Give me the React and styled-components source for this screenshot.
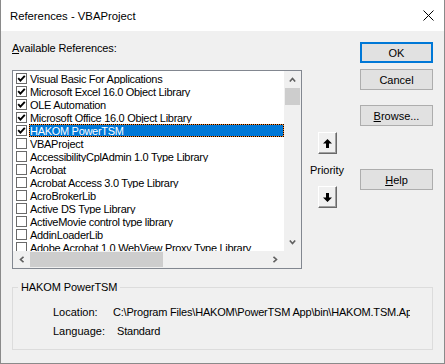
import React from "react";
import styled, { createGlobalStyle } from "styled-components";

const Global = createGlobalStyle`
  html, body { margin: 0; padding: 0; background: #fff; }
  #root { width: 445px; height: 364px; }
  * { box-sizing: border-box; }
`;

const Window = styled.div`
  width: 445px;
  height: 364px;
  display: flex;
  flex-direction: column;
  border: 1px solid #8a8a8a;
  border-top: none;
  font-family: "Liberation Sans", Arial, sans-serif;
  font-size: 11px;
  color: #000;
  background: #f0f0f0;
`;

const TitleBar = styled.div`
  height: 31px;
  flex: none;
  background: #fff;
  display: flex;
  align-items: center;
  justify-content: space-between;
  padding: 0 10px 0 9px;
  font-size: 11.3px;
`;

const Body = styled.div`
  flex: 1;
  display: flex;
  flex-direction: column;
  padding: 10px 11px 13px 11px;
`;

const TopRow = styled.div`
  display: grid;
  grid-template-columns: 290px 50px 1fr;
`;

const LeftCol = styled.div`
  display: flex;
  flex-direction: column;
`;

const Label = styled.div`
  height: 29px;
  line-height: 15px;
  letter-spacing: -0.1px;
`;

const U = styled.span`
  text-decoration: underline;
  text-underline-offset: 1px;
`;

const ListBox = styled.div`
  width: 290px;
  height: 199px;
  border: 1px solid #828790;
  background: #fff;
  display: grid;
  grid-template-columns: 1fr 17px;
  grid-template-rows: 180px 17px;
`;

const Items = styled.div`
  overflow: hidden;
  padding: 1px 0 0 3px;
`;

const Row = styled.div`
  height: 13px;
  display: flex;
  align-items: center;
  white-space: nowrap;
`;

const Box = styled.span`
  width: 11px;
  height: 11px;
  flex: none;
  border: 1px solid #6a6a6a;
  background: #fff;
  display: flex;
  align-items: center;
  justify-content: center;
  margin-right: 2px;
`;

const ItemText = styled.span`
  flex: 1;
  height: 13px;
  line-height: 12px;
  padding-left: 1px;
  letter-spacing: -0.3px;
  border: 1px solid transparent;
  border-left: none;
  overflow: hidden;
  ${(p) =>
    p.$selected &&
    `
    color: #fff;
    border: 1px dotted #000;
    padding-left: 0;
    background: linear-gradient(#0078d7, #0078d7) padding-box, #ff8728 border-box;
  `}
`;

const VScroll = styled.div`
  background: #f0f0f0;
  display: flex;
  flex-direction: column;
`;

const HScroll = styled.div`
  background: #f0f0f0;
  display: flex;
`;

const Corner = styled.div`
  background: #f0f0f0;
`;

const ArrowCell = styled.div`
  width: 17px;
  height: 17px;
  flex: none;
  display: flex;
  align-items: center;
  justify-content: center;
`;

const Track = styled.div`
  flex: 1;
  display: flex;
  flex-direction: ${(p) => (p.$vertical ? "column" : "row")};
`;

const Thumb = styled.div`
  background: #cdcdcd;
  ${(p) =>
    p.$vertical
      ? `height: 17px; margin: 0 1px; `
      : `width: 133px; margin: 1px 0; `}
`;

const MidCol = styled.div`
  display: flex;
  flex-direction: column;
  align-items: center;
  padding-top: 91px;
`;

const ArrowButton = styled.button`
  width: 19px;
  height: 22px;
  padding: 0;
  background: #f0f0f0;
  border: 1px solid;
  border-color: #fff #696969 #696969 #fff;
  box-shadow: inset -1px -1px #a0a0a0;
  display: flex;
  align-items: center;
  justify-content: center;
`;

const Priority = styled.div`
  line-height: 15px;
  margin: 9px 0 8px;
`;

const RightCol = styled.div`
  display: flex;
  flex-direction: column;
  align-items: flex-end;
  padding-top: 1px;
`;

const Button = styled.button`
  width: 73px;
  height: 21px;
  margin-top: ${(p) => p.$gap || 0}px;
  padding: 0;
  font-family: inherit;
  font-size: 11px;
  color: #000;
  background: #e1e1e1;
  border: ${(p) => (p.$default ? "2px solid #0078d7" : "1px solid #adadad")};
`;

const Group = styled.fieldset`
  margin: 11px 0 0;
  padding: 0 22px 10px 0;
  border: 1px solid #dcdcdc;
  min-width: 0;
`;

const Legend = styled.legend`
  margin-left: 5px;
  padding: 0 3px;
  line-height: 14px;
  letter-spacing: -0.1px;
`;

const Details = styled.div`
  display: grid;
  grid-template-columns: 60px 1fr;
  row-gap: 4px;
  margin-top: 11px;
  padding-left: 40px;
  line-height: 15px;
`;

const Value = styled.div`
  white-space: nowrap;
  overflow: hidden;
  letter-spacing: -0.2px;
  padding-left: ${(p) => p.$indent || 0}px;
`;

const Chevron = ({ dir }) => {
  const pts = {
    up: "0.8,4.5 3.5,1.5 6.2,4.5",
    down: "0.8,0.5 3.5,3.5 6.2,0.5",
    left: "4.5,0.8 1.5,3.5 4.5,6.2",
    right: "0.5,0.8 3.5,3.5 0.5,6.2",
  }[dir];
  const v = dir === "up" || dir === "down";
  return (
    <svg width={v ? 7 : 5} height={v ? 5 : 7} viewBox={v ? "0 0 7 5" : "0 0 5 7"}>
      <polyline points={pts} fill="none" stroke="#606060" strokeWidth="1.6" />
    </svg>
  );
};

const Check = () => (
  <svg width="9" height="9" viewBox="0 0 9 9">
    <polyline points="1.2,4.2 3.4,6.6 7.8,1.8" fill="none" stroke="#000" strokeWidth="1.9" />
  </svg>
);

const BigArrow = ({ down }) => (
  <svg width="9" height="9" viewBox="0 0 9 9" style={down ? { transform: "rotate(180deg)" } : undefined}>
    <polygon points="4.5,0 9,4.5 6,4.5 6,9 3,9 3,4.5 0,4.5" fill="#000" />
  </svg>
);

const items = [
  { name: "Visual Basic For Applications", checked: true },
  { name: "Microsoft Excel 16.0 Object Library", checked: true },
  { name: "OLE Automation", checked: true },
  { name: "Microsoft Office 16.0 Object Library", checked: true },
  { name: "HAKOM PowerTSM", checked: true, selected: true },
  { name: "VBAProject" },
  { name: "AccessibilityCplAdmin 1.0 Type Library" },
  { name: "Acrobat" },
  { name: "Acrobat Access 3.0 Type Library" },
  { name: "AcroBrokerLib" },
  { name: "Active DS Type Library" },
  { name: "ActiveMovie control type library" },
  { name: "AddinLoaderLib" },
  { name: "Adobe Acrobat 1.0 WebView Proxy Type Library" },
];

export default function App() {
  return (
    <>
      <Global />
      <Window>
        <TitleBar>
          <span>References - VBAProject</span>
          <svg width="11" height="11" viewBox="0 0 11 11">
            <path d="M0.5 0.5 L10.5 10.5 M10.5 0.5 L0.5 10.5" stroke="#000" strokeWidth="1" />
          </svg>
        </TitleBar>
        <Body>
          <TopRow>
            <LeftCol>
              <Label>
                <U>A</U>vailable References:
              </Label>
              <ListBox>
                <Items>
                  {items.map((it) => (
                    <Row key={it.name}>
                      <Box>{it.checked && <Check />}</Box>
                      <ItemText $selected={it.selected}>{it.name}</ItemText>
                    </Row>
                  ))}
                </Items>
                <VScroll>
                  <ArrowCell><Chevron dir="up" /></ArrowCell>
                  <Track $vertical>
                    <Thumb $vertical />
                  </Track>
                  <ArrowCell><Chevron dir="down" /></ArrowCell>
                </VScroll>
                <HScroll>
                  <ArrowCell><Chevron dir="left" /></ArrowCell>
                  <Track>
                    <Thumb />
                  </Track>
                  <ArrowCell><Chevron dir="right" /></ArrowCell>
                </HScroll>
                <Corner />
              </ListBox>
            </LeftCol>
            <MidCol>
              <ArrowButton><BigArrow /></ArrowButton>
              <Priority>Priority</Priority>
              <ArrowButton><BigArrow down /></ArrowButton>
            </MidCol>
            <RightCol>
              <Button $default>OK</Button>
              <Button $gap={6}>Cancel</Button>
              <Button $gap={15}>
                <U>B</U>rowse...
              </Button>
              <Button $gap={43}>
                <U>H</U>elp
              </Button>
            </RightCol>
          </TopRow>
          <Group>
            <Legend>HAKOM PowerTSM</Legend>
            <Details>
              <span>Location:</span>
              <Value>C:\Program Files\HAKOM\PowerTSM App\bin\HAKOM.TSM.App</Value>
              <span>Language:</span>
              <Value $indent={4}>Standard</Value>
            </Details>
          </Group>
        </Body>
      </Window>
    </>
  );
}
